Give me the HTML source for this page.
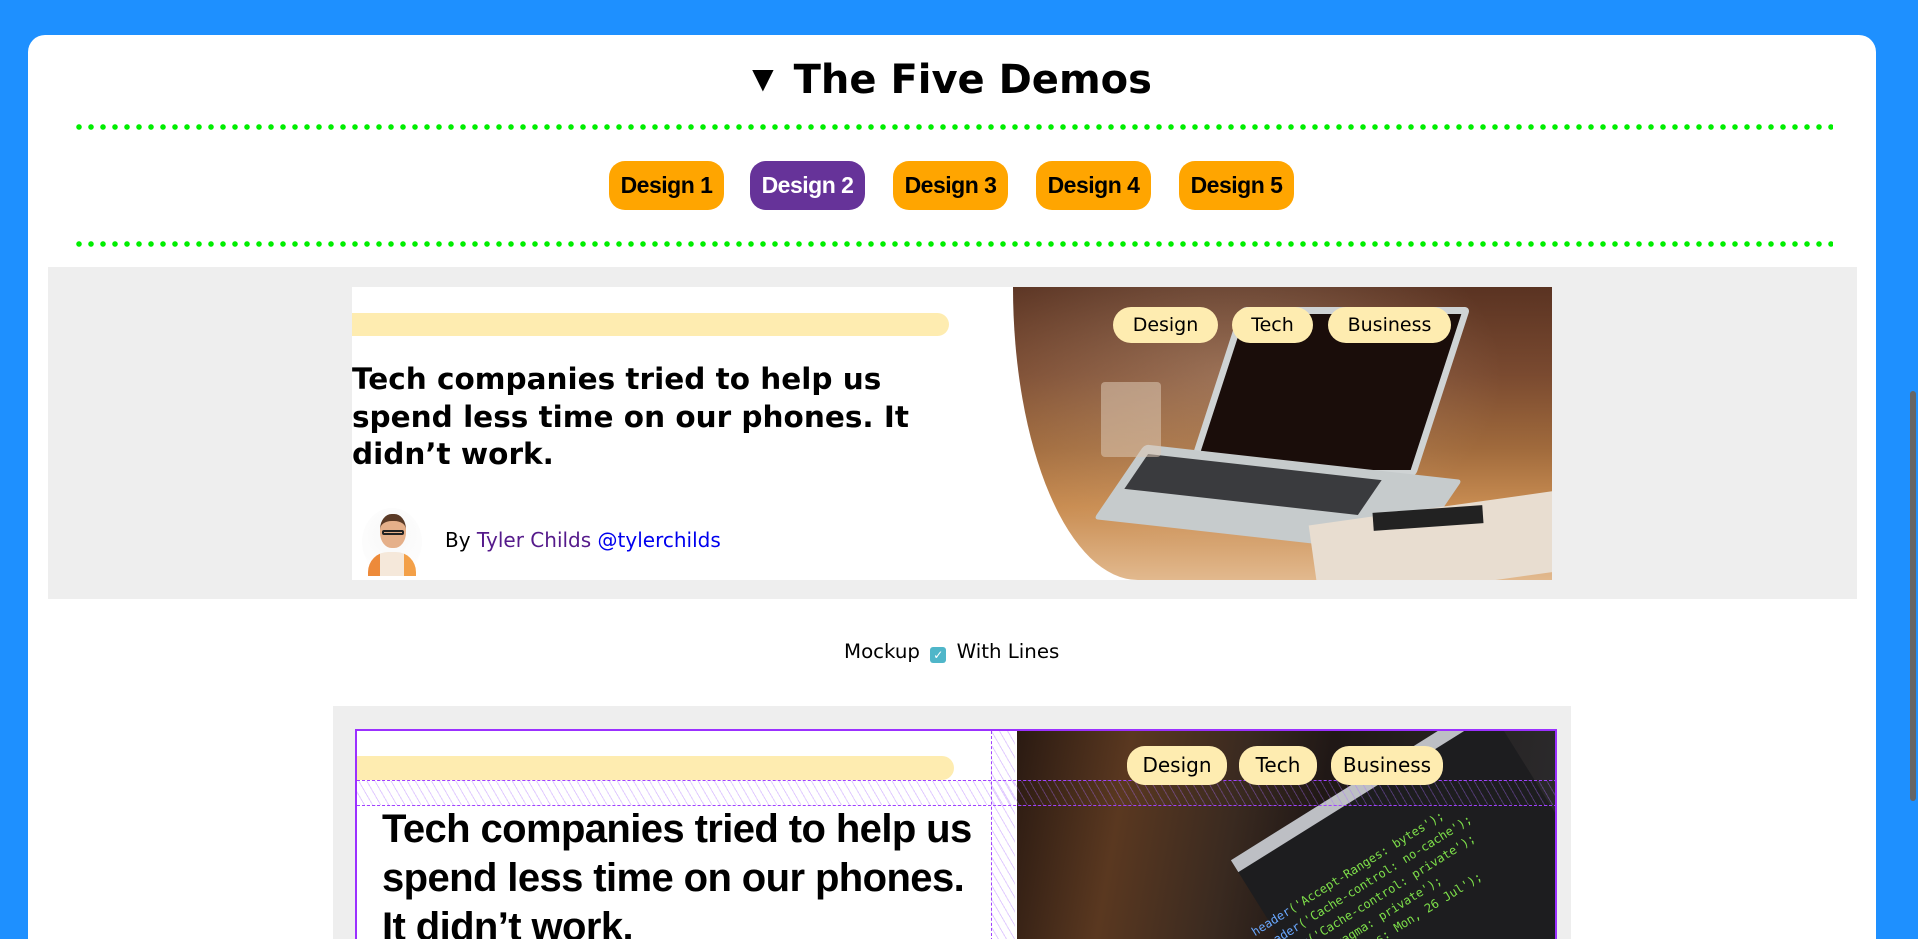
<!DOCTYPE html>
<html><head><meta charset="utf-8"><style>
*{box-sizing:border-box;margin:0;padding:0}
html,body{width:1918px;height:939px;overflow:hidden;background:#1e90ff;font-family:"DejaVu Sans","Liberation Sans",sans-serif}
.card{position:absolute;left:28px;top:35px;width:1848px;height:904px;background:#fff;border-radius:17px 17px 0 0}
.sb{position:absolute;left:1908px;top:0;width:10px;height:939px;background:#1e90ff}
.thumb{position:absolute;left:1910px;top:391px;width:6px;height:410px;background:#666;border-radius:3px}
.title{position:absolute;left:0;width:1918px;top:57px;padding-right:14px;text-align:center;font-weight:bold;font-size:40px;color:#000}
.dots{position:absolute;left:73px;width:1760px;height:6px;background:radial-gradient(circle,#00ee00 2.5px,transparent 3px) 0 0/12px 6px repeat-x}
.btn{position:absolute;top:161px;height:49px;width:115px;border-radius:16px;background:#ffa500;color:#000;font-family:"Liberation Sans",sans-serif;font-weight:bold;font-size:23px;line-height:49px;text-align:center;letter-spacing:-0.5px}
.grey{position:absolute;background:#eee}
.tag{position:absolute;background:#feecb0;border-radius:18px;text-align:center;color:#000}
</style></head><body>
<div class="card"></div>
<div class="sb"></div><div class="thumb"></div>
<div class="title"><span style="font-size:28px;position:relative;top:-5px;margin-right:20px">▼</span>The Five Demos</div>
<div class="dots" style="top:124px"></div>
<div class="dots" style="top:241px"></div>
<div class="btn" style="left:609px">Design 1</div>
<div class="btn" style="left:750px;background:#663399;color:#fff">Design 2</div>
<div class="btn" style="left:893px">Design 3</div>
<div class="btn" style="left:1036px">Design 4</div>
<div class="btn" style="left:1179px">Design 5</div>

<div class="grey" style="left:48px;top:267px;width:1809px;height:332px"></div>
<div style="position:absolute;left:352px;top:287px;width:1200px;height:293px;background:#fff;overflow:hidden">
  <div style="position:absolute;left:661px;top:0;width:539px;height:293px;overflow:hidden;border-bottom-left-radius:125px 293px;background:linear-gradient(180deg,#5a3322 0%,#7a4a30 30%,#a06a3c 55%,#c98d52 75%,#e2b98e 100%)">
      <div style="position:absolute;left:0;top:0;width:539px;height:293px;background:radial-gradient(ellipse at 40% 30%,rgba(255,230,200,.25),transparent 60%)"></div>
      <div style="position:absolute;left:200px;top:20px;width:230px;height:170px;background:#1a0d0a;border:7px solid #cfd3d4;transform:skewX(-18deg);border-radius:6px"></div>
      <div style="position:absolute;left:95px;top:175px;width:340px;height:75px;background:#c6cbcc;transform:skewX(-30deg) rotate(6deg);border-radius:4px"></div>
      <div style="position:absolute;left:115px;top:180px;width:250px;height:35px;background:#3a3b3e;transform:skewX(-30deg) rotate(6deg)"></div>
      <div style="position:absolute;left:88px;top:95px;width:60px;height:75px;background:rgba(220,200,180,.55);border-radius:4px"></div>
      <div style="position:absolute;left:300px;top:220px;width:260px;height:80px;background:#e8ddd0;transform:rotate(-8deg)"></div>
      <div style="position:absolute;left:360px;top:222px;width:110px;height:18px;background:#222;transform:rotate(-4deg)"></div>
  </div>
  <div style="position:absolute;left:0;top:26px;width:597px;height:23px;background:#feecb0;border-radius:0 12px 12px 0"></div>
  <div style="position:absolute;left:0;top:74px;width:580px;font-weight:bold;font-size:29.5px;line-height:37.5px;color:#000">Tech companies tried to help us spend less time on our phones. It didn’t work.</div>
  <div style="position:absolute;left:10px;top:221px;width:60px;height:68px;border-radius:50%;background:radial-gradient(circle at 50% 40%,#f8f8f8,#fff)">
    <div style="position:absolute;left:18px;top:6px;width:26px;height:34px;border-radius:45%;background:#e5b08a;border-top:7px solid #5a3a26"></div>
    <div style="position:absolute;left:20px;top:22px;width:22px;height:5px;border:2px solid #222;border-radius:2px"></div>
    <div style="position:absolute;left:6px;top:44px;width:48px;height:24px;border-radius:20px 20px 0 0;background:linear-gradient(90deg,#ed8a3a 25%,#f5e8da 25%,#f5e8da 75%,#f3a048 75%)"></div>
  </div>
  <div style="position:absolute;left:93px;top:241px;font-size:20px;color:#000">By <span style="color:#551a8b">Tyler Childs</span> <span style="color:#0000ee">@tylerchilds</span></div>
  <div class="tag" style="left:761px;top:20px;width:105px;height:36px;font-size:19px;line-height:36px">Design</div>
  <div class="tag" style="left:880px;top:20px;width:81px;height:36px;font-size:19px;line-height:36px">Tech</div>
  <div class="tag" style="left:976px;top:20px;width:123px;height:36px;font-size:19px;line-height:36px">Business</div>
</div>

<div style="position:absolute;left:844px;top:640px;font-size:19.8px;color:#000;white-space:nowrap">Mockup <span style="display:inline-block;width:16px;height:16px;background:#4fb6c9;border-radius:3px;vertical-align:-1px;margin:0 4px;color:#fff;font-size:12px;line-height:16px;text-align:center">✓</span> With Lines</div>

<div class="grey" style="left:333px;top:706px;width:1238px;height:233px"></div>
<div style="position:absolute;left:355px;top:729px;width:1202px;height:210px;border:2px solid #9b30ff;border-bottom:none;background:#fff;overflow:hidden">
  <div style="position:absolute;left:660px;top:0;width:540px;height:210px;background:linear-gradient(100deg,#2a1a12 0%,#5a3820 20%,#3a2a20 40%,#201816 55%,#2c2c2e 100%);overflow:hidden">
    <div style="position:absolute;left:260px;top:30px;width:300px;height:260px;background:#1d1d1f;transform:rotate(-32deg);border-top:14px solid #bdbfc4"></div>
    <div style="position:absolute;left:240px;top:100px;width:320px;font-family:'DejaVu Sans Mono',monospace;font-size:12px;line-height:18px;color:#7ee04a;transform:rotate(-32deg);white-space:pre"><span style="color:#6aa8ff">header</span>('Accept-Ranges: bytes');
<span style="color:#6aa8ff">header</span>('Cache-control: no-cache');
<span style="color:#6aa8ff">header</span>('Cache-control: private');
<span style="color:#6aa8ff">header</span>('Pragma: private');
<span style="color:#6aa8ff">header</span>('Expires: Mon, 26 Jul');
<span style="color:#6aa8ff">readfile</span>($image);
<span style="color:#ff0">exit</span>;</div>
  </div>
  <div style="position:absolute;left:0;top:25px;width:597px;height:24px;background:#feecb0;border-radius:0 12px 12px 0"></div>
  <div style="position:absolute;left:0;top:49px;width:1200px;height:26px;border-top:1px dashed #a040ff;border-bottom:1px dashed #a040ff;background:repeating-linear-gradient(60deg,transparent 0 6px,rgba(170,110,255,.35) 6px 7px)"></div>
  <div style="position:absolute;left:634px;top:0;width:24px;height:210px;border-left:1px dashed #a040ff;background:repeating-linear-gradient(60deg,transparent 0 6px,rgba(170,110,255,.35) 6px 7px)"></div>
  <div style="position:absolute;left:25px;top:74px;width:605px;height:136px;overflow:hidden;font-family:'Liberation Sans',sans-serif;font-weight:bold;font-size:40px;line-height:49px;color:#000;letter-spacing:-0.6px">Tech companies tried to help us spend less time on our phones. It didn’t work.</div>
  <div class="tag" style="left:770px;top:15px;width:100px;height:39px;font-size:20px;line-height:39px">Design</div>
  <div class="tag" style="left:882px;top:15px;width:78px;height:39px;font-size:20px;line-height:39px">Tech</div>
  <div class="tag" style="left:974px;top:15px;width:112px;height:39px;font-size:20px;line-height:39px">Business</div>
</div>
</body></html>
